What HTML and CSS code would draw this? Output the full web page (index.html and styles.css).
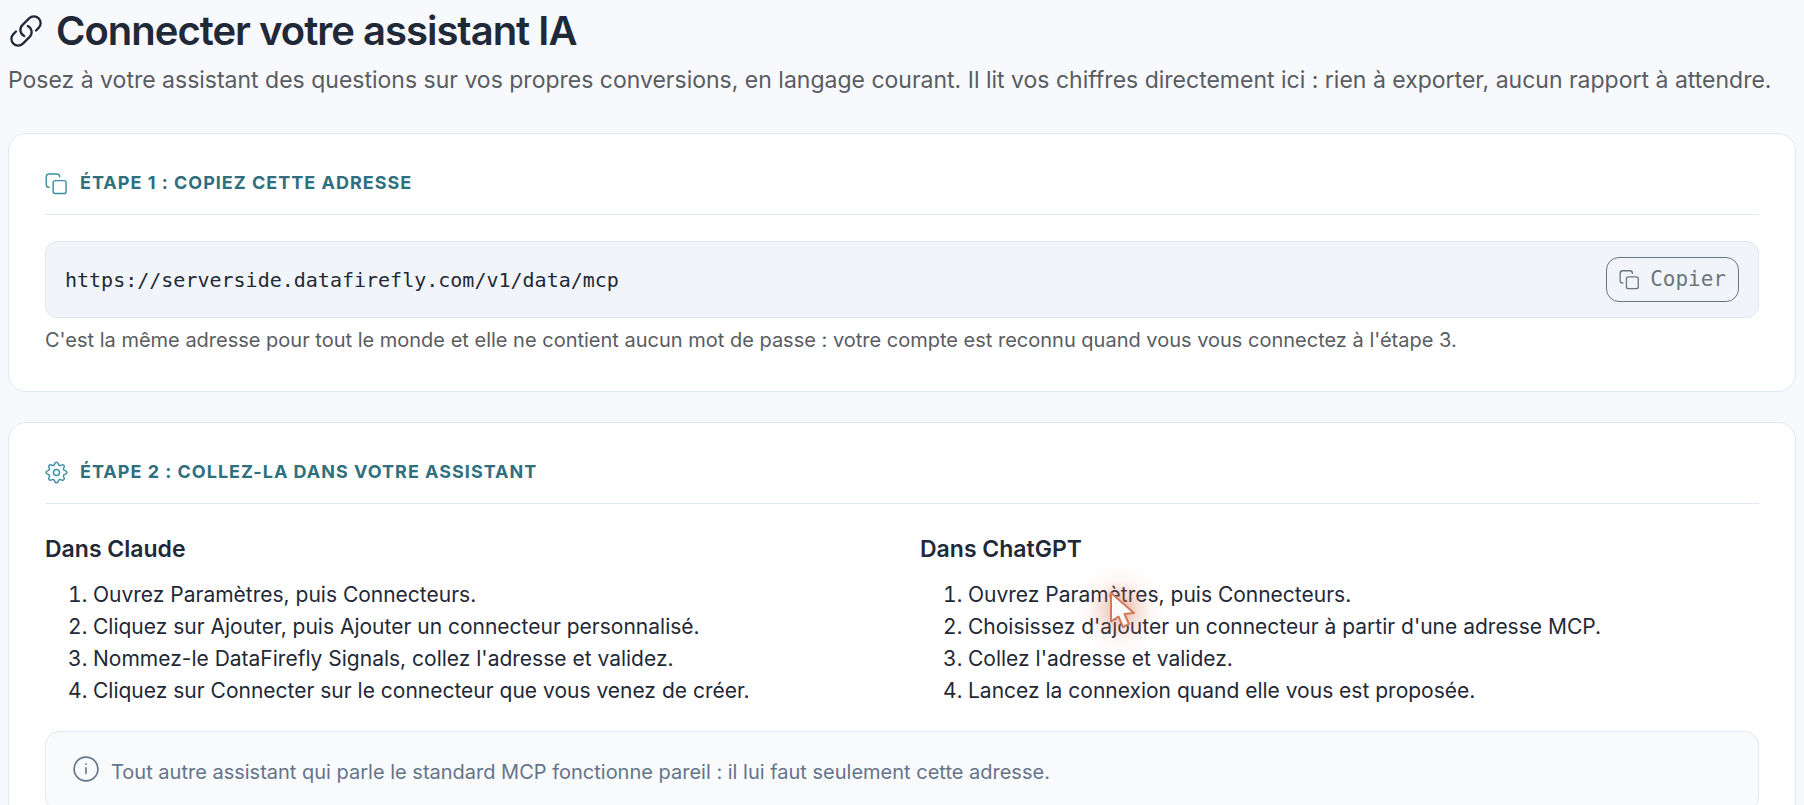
FILE: index.html
```html
<!DOCTYPE html>
<html lang="fr">
<head>
<meta charset="utf-8">
<title>Connecter votre assistant IA</title>
<link rel="stylesheet" href="styles.css">
</head>
<body>
<svg class="sprite" aria-hidden="true">
  <symbol id="icon-copy" viewBox="0 0 24 24"><rect x="8.500" y="9" width="13.500" height="13.500" rx="2.200"/><path d="M4.300 16c-2 0-3-1-3-3V5c0-2 1-3 3-3h8c2 0 3 1 3 3"/></symbol>
  <symbol id="icon-gear" viewBox="0 0 24 24">
    <path id="tooth" d="M8.940 4.610C9.900 4.200 10.100 3.600 10.300 2.600Q10.600 1.200 12 1.200T13.700 2.600C13.900 3.600 14.100 4.200 15.060 4.610"/>
    <use href="#tooth" transform="rotate(45 12 12)"/>
    <use href="#tooth" transform="rotate(90 12 12)"/>
    <use href="#tooth" transform="rotate(135 12 12)"/>
    <use href="#tooth" transform="rotate(180 12 12)"/>
    <use href="#tooth" transform="rotate(225 12 12)"/>
    <use href="#tooth" transform="rotate(270 12 12)"/>
    <use href="#tooth" transform="rotate(315 12 12)"/>
    <circle cx="12" cy="12" r="3.200"/>
  </symbol>
</svg>
<main class="page">
  <header class="page-header">
    <h1 class="page-title">
      <svg class="icon icon-link" viewBox="0 0 24 24" aria-hidden="true"><path d="M13.190 8.688a4.500 4.500 0 0 1 1.242 7.244l-4.500 4.500a4.500 4.500 0 0 1-6.364-6.364l1.757-1.757m13.350-.622 1.757-1.757a4.500 4.500 0 0 0-6.364-6.364l-4.500 4.500a4.500 4.500 0 0 0 1.242 7.244"/></svg>
      Connecter votre assistant IA
    </h1>
    <p class="page-lead">Posez à votre assistant des questions sur vos propres conversions, en langage courant. Il lit vos chiffres directement ici : rien à exporter, aucun rapport à attendre.</p>
  </header>

  <section class="card">
    <h2 class="card-title"><svg class="icon icon-step" aria-hidden="true"><use href="#icon-copy"/></svg>Étape 1 : copiez cette adresse</h2>
    <div class="address">
      <code class="address-url">https://serverside.datafirefly.com/v1/data/mcp</code>
      <button class="copy-button" type="button"><svg class="icon icon-copy" aria-hidden="true"><use href="#icon-copy"/></svg>Copier</button>
    </div>
    <p class="hint">C'est la même adresse pour tout le monde et elle ne contient aucun mot de passe : votre compte est reconnu quand vous vous connectez à l'étape 3.</p>
  </section>

  <section class="card">
    <h2 class="card-title"><svg class="icon icon-step" aria-hidden="true"><use href="#icon-gear"/></svg>Étape 2 : collez-la dans votre assistant</h2>
    <div class="guides">
      <div class="guide">
        <h3 class="guide-title">Dans Claude</h3>
        <ol class="steps">
          <li>Ouvrez Paramètres, puis Connecteurs.</li>
          <li>Cliquez sur Ajouter, puis Ajouter un connecteur personnalisé.</li>
          <li>Nommez-le DataFirefly Signals, collez l'adresse et validez.</li>
          <li>Cliquez sur Connecter sur le connecteur que vous venez de créer.</li>
        </ol>
      </div>
      <div class="guide">
        <h3 class="guide-title">Dans ChatGPT</h3>
        <ol class="steps">
          <li>Ouvrez Paramètres, puis Connecteurs.</li>
          <li>Choisissez d'ajouter un connecteur à partir d'une adresse MCP.</li>
          <li>Collez l'adresse et validez.</li>
          <li>Lancez la connexion quand elle vous est proposée.</li>
        </ol>
        <svg class="pointer" viewBox="0 0 100 100" aria-hidden="true">
          <defs><radialGradient id="glow"><stop offset="0" stop-color="#d97757" stop-opacity=".6"/><stop offset=".35" stop-color="#d97757" stop-opacity=".26"/><stop offset=".65" stop-color="#d97757" stop-opacity=".06"/><stop offset="1" stop-color="#d97757" stop-opacity="0"/></radialGradient></defs>
          <circle cx="50" cy="50" r="46" fill="url(#glow)"/>
          <path d="M41 33v28.500l7.500-5 4.500 10.500 6-3-4.500-10 9.500-1z" fill="#fbfaf8" stroke="#d2795a" stroke-width="2" stroke-linejoin="round"/>
        </svg>
      </div>
    </div>
    <div class="note">
      <svg class="icon icon-info" viewBox="0 0 24 24" aria-hidden="true"><circle cx="12" cy="12" r="11"/><path d="M12 11v5M12 7.300v.2"/></svg>
      <p class="note-text">Tout autre assistant qui parle le standard MCP fonctionne pareil : il lui faut seulement cette adresse.</p>
    </div>
  </section>
</main>
</body>
</html>
```
FILE: styles.css
```css
* { box-sizing: border-box; }
html { overflow: hidden; }
body {
  margin: 0;
  background: #f8f9fd;
  color: #1f2937;
  font-family: Inter, "Liberation Sans", sans-serif;
  font-size: 20px;
  line-height: 32px;
}
h1, h2, h3, p, ol { margin: 0; }
.sprite { display: none; }
.icon {
  flex: none;
  fill: none;
  stroke: currentColor;
  stroke-linecap: round;
  stroke-linejoin: round;
}
.page { padding: 8px; }
.page-header { margin-bottom: 35px; }
.page-title {
  display: flex;
  align-items: center;
  gap: 12px;
  font-size: 40px;
  font-weight: 600;
  line-height: 46px;
  letter-spacing: -1px;
}
.page-lead {
  margin-top: 8px;
  color: #595c61;
  font-size: 23px;
  line-height: 36px;
}
.icon-link { width: 36px; height: 36px; stroke-width: 1.5; }
.card {
  margin-bottom: 30px;
  padding: 33px 36px 35px;
  border: 1px solid #e2e8f0;
  border-radius: 18px;
  background: #fff;
}
.card-title {
  display: flex;
  align-items: center;
  gap: 12px;
  margin-bottom: 26px;
  padding-bottom: 15px;
  border-bottom: 1px solid #e2e8f0;
  color: #2f6f7e;
  font-size: 18px;
  font-weight: 700;
  letter-spacing: 1px;
  text-transform: uppercase;
}
.icon-step { width: 23px; height: 23px; color: #3d8fa3; stroke-width: 1.5; }
.address {
  display: flex;
  align-items: center;
  justify-content: space-between;
  padding: 15px 19px;
  border: 1px solid #e2e8f0;
  border-radius: 12px;
  background: #f1f5f9;
}
.address-url { font-family: "DejaVu Sans Mono", monospace; font-size: 20px; }
.copy-button {
  display: flex;
  align-items: center;
  gap: 10px;
  padding: 6px 12px;
  border: 1px solid #6c757d;
  border-radius: 13px;
  background: transparent;
  color: #6c757d;
  font-family: "DejaVu Sans Mono", monospace;
  font-size: 21px;
  line-height: 31px;
}
.icon-copy { width: 21px; height: 21px; stroke-width: 1.5; }
.hint { margin-top: 6px; color: #595c61; }
.guides { display: grid; grid-template-columns: 1fr 1fr; gap: 36px; }
.guide { position: relative; }
.guide-title { margin-bottom: 11px; font-size: 23px; font-weight: 600; line-height: 38px; }
.steps { padding-left: 48px; font-size: 21px; }
.note {
  display: flex;
  align-items: flex-start;
  gap: 12px;
  margin-top: 24px;
  padding: 24px 27px 22px;
  border: 1px solid #e2e8f0;
  border-radius: 14px;
  background: #f8fafc;
  color: #64748b;
}
.icon-info { width: 26px; height: 26px; stroke-width: 1.5; }
.pointer { position: absolute; top: 30px; left: 150px; width: 100px; height: 100px; }
```
